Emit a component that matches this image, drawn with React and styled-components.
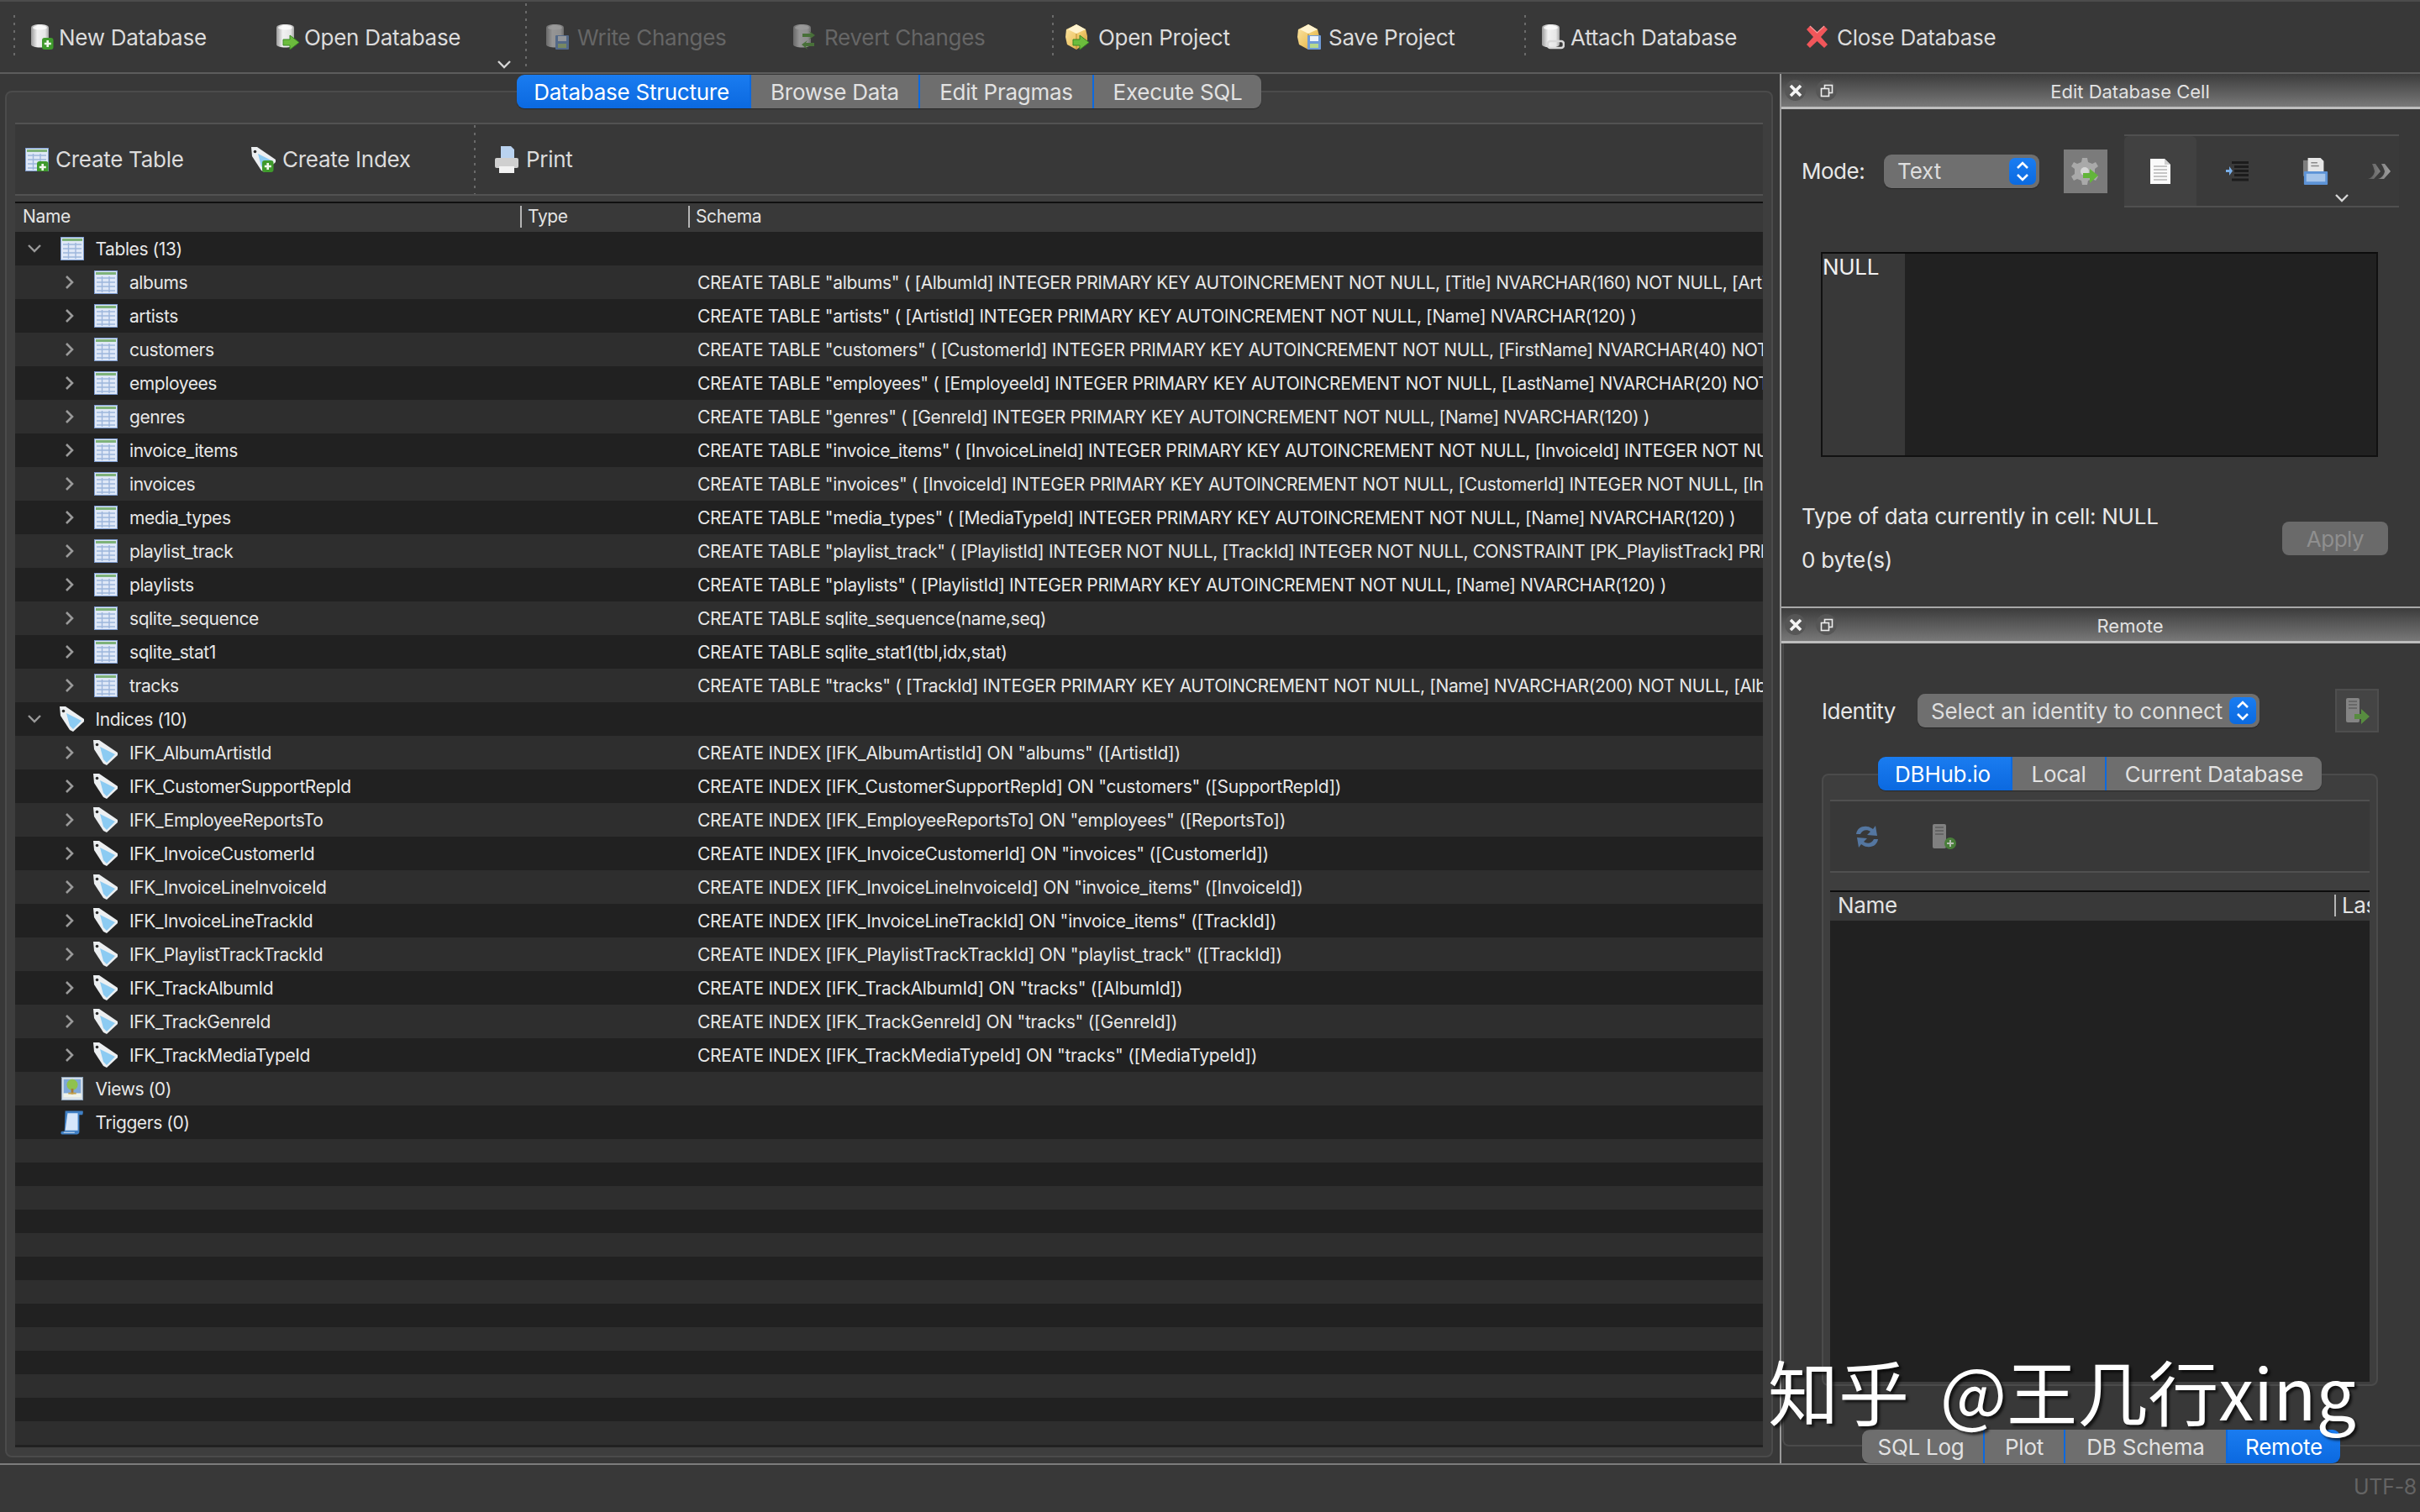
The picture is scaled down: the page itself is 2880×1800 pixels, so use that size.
import React from 'react';
import styled, { createGlobalStyle } from 'styled-components';

const GlobalStyle = createGlobalStyle`
  html, body { margin: 0; padding: 0; background: #383838; }
  * { box-sizing: border-box; }
  body { font-family: Inter, "Liberation Sans", sans-serif; color: #e2e2e2; }
`;

/* ---------- icons ---------- */

const Defs = () => (
  <svg width="0" height="0" style={{ position: 'absolute' }}>
    <defs>
      <linearGradient id="cyl" x1="0" x2="1" y1="0" y2="0">
        <stop offset="0" stopColor="#9b9b9b" />
        <stop offset="0.35" stopColor="#f1f1f1" />
        <stop offset="0.8" stopColor="#e6e6e6" />
        <stop offset="1" stopColor="#a4a4a4" />
      </linearGradient>
      <linearGradient id="box" x1="0" x2="1" y1="0" y2="1">
        <stop offset="0" stopColor="#fbe6a8" />
        <stop offset="0.55" stopColor="#efc869" />
        <stop offset="1" stopColor="#c9963a" />
      </linearGradient>
      <linearGradient id="fade" x1="0" x2="1" y1="0" y2="0">
        <stop offset="0" stopColor="#5a5a5a" />
        <stop offset="1" stopColor="#a0a0a0" />
      </linearGradient>
    </defs>
  </svg>
);

const Cylinder = () => (
  <>
    <path d="M1 4c0-3 5-4 10.500-4S22 1 22 4v20c0 2-5 3.500-10.500 3.500S1 26 1 24z" fill="url(#cyl)" />
    <ellipse cx="11.500" cy="4" rx="8.500" ry="2.500" fill="#fff" opacity=".75" />
  </>
);

const BoxShape = () => (
  <>
    <path d="M13 0l11 6 2 8v7l-13 9-11-6-2-9 1-9z" fill="url(#box)" />
    <path d="M3 6l10 5 11-5-11-6z" fill="#fff3cf" />
    <path d="M13 11v19" stroke="#b98a30" strokeWidth="1" />
  </>
);

const PlusBadge = () => (
  <>
    <rect x="14" y="16" width="13.500" height="14" rx="3" fill="#3f9a2c" />
    <path d="M20.700 19v8M16.800 23h8" stroke="#f2f7ee" strokeWidth="2.600" />
  </>
);

const ArrowBadge = () => (
  <path d="M9 18h8v-5l11 8.500L17 30v-5H9z" fill="#6cbc3d" stroke="#3a8a25" strokeWidth="1" />
);

const FloppyBadge = () => (
  <>
    <rect x="12" y="13" width="16" height="17" rx="1" fill="#6f9bd8" />
    <rect x="15" y="14" width="10" height="6" fill="#eef3fb" />
    <rect x="15" y="23" width="10" height="5" fill="#b7d88c" />
  </>
);

const SwapBadge = () => (
  <>
    <path d="M12 11h10l-2-3 7 5-7 5 2-3h-10z" fill="#58a83a" />
    <path d="M26 22H16l2-3-7 5 7 6-2-4h10z" fill="#58a83a" />
  </>
);

const LinkBadge = () => (
  <rect x="8" y="20" width="19" height="8" rx="3" fill="none" stroke="#d9d9d9" strokeWidth="2.600" />
);

const Badge = ({ type }) => {
  if (type === 'plus') return <PlusBadge />;
  if (type === 'arrow') return <ArrowBadge />;
  if (type === 'floppy') return <FloppyBadge />;
  if (type === 'swap') return <SwapBadge />;
  if (type === 'link') return <LinkBadge />;
  return null;
};

const DbIcon = ({ badge }) => (
  <svg width="28" height="30" viewBox="0 0 28 30">
    <Cylinder />
    <Badge type={badge} />
  </svg>
);

const ProjectIcon = ({ badge }) => (
  <svg width="28" height="32" viewBox="0 0 28 30">
    <BoxShape />
    <Badge type={badge} />
  </svg>
);

const CloseIcon = () => (
  <svg width="27" height="28" viewBox="0 0 27 28">
    <path d="M1 5l4-4 8.500 8L22 1l4 4-8 9 8 9-4 4-8.500-8L5 27l-4-4 8-9z" fill="#f1565a" />
    <path d="M5 1l8.500 8L22 1" fill="none" stroke="#ff9a9a" strokeWidth="1.200" />
  </svg>
);

const TableIcon = ({ plus }) => (
  <svg width="28" height="28" viewBox="0 0 28 28">
    <rect x="0.500" y="0.500" width="27" height="27" fill="#dfe8f7" stroke="#7d9ccf" />
    <rect x="2" y="2" width="24" height="3" fill="#7eb27a" />
    <path d="M3 9h22M3 14h22M3 19h22M3 24h22M9.500 7v19M18 7v19" stroke="#9db6dc" strokeWidth="1.400" />
    {plus && <PlusBadge />}
  </svg>
);

const TagSvg = styled.svg`
  flex: none;
  margin-left: ${(p) => (p.$tree ? -2 : 0)}px;
`;

const TagIcon = ({ plus, tree }) => (
  <TagSvg $tree={tree} width="30" height="30" viewBox="0 0 30 30">
    <path d="M1 0h7l22 15v3L17 30l-4-2L2 11z" fill="#eceff1" />
    <path d="M9 8l18 9-10 10-4-4z" fill="#8ccbf2" />
    <circle cx="5.500" cy="5.500" r="1.800" fill="#2c2c2c" />
    {plus && <PlusBadge />}
  </TagSvg>
);

const ViewIcon = () => (
  <svg width="28" height="28" viewBox="0 0 28 30">
    <rect x="0.500" y="0.500" width="27" height="29" fill="#d9e2ea" stroke="#8aa0b8" />
    <rect x="3" y="3" width="22" height="18" fill="#7fa8d8" />
    <rect x="3" y="21" width="22" height="5" fill="#eef2e8" />
    <circle cx="14" cy="10" r="7" fill="#8fc24e" />
    <rect x="12.500" y="15" width="3" height="7" fill="#a67a3a" />
    <rect x="9" y="20" width="10" height="2" fill="#c2a04a" />
  </svg>
);

const TriggerIcon = () => (
  <svg width="28" height="31" viewBox="0 0 30 32">
    <path d="M6 1h22c1 0 1 3 0 5h-4v22c0 2-2 3-4 3H2c-2 0-2-4 0-4h3z" fill="#3f7fc4" />
    <path d="M9 4h13v22H6z" fill="#d6e6fa" />
    <path d="M4 28h14v1H4z" fill="#eef4fc" />
  </svg>
);

const ChevronRight = () => (
  <svg width="12" height="18" viewBox="0 0 12 18">
    <path d="M2 2l7 7-7 7" fill="none" stroke="#9a9a9a" strokeWidth="2.600" />
  </svg>
);

const ChevronDown = ({ color = '#9a9a9a' }) => (
  <svg width="18" height="12" viewBox="0 0 18 12">
    <path d="M2 2l7 7 7-7" fill="none" stroke={color} strokeWidth="2.400" />
  </svg>
);

const SmallButtonIcon = ({ kind }) => {
  if (kind === 'close') {
    return (
      <svg width="16" height="16" viewBox="0 0 16 16">
        <path d="M2 2l12 12M14 2L2 14" stroke="#f4f4f4" strokeWidth="3.600" />
      </svg>
    );
  }
  return (
    <svg width="16" height="16" viewBox="0 0 16 16">
      <rect x="5.500" y="1.500" width="9" height="9" fill="none" stroke="#eee" strokeWidth="1.600" />
      <rect x="1.500" y="5.500" width="9" height="9" fill="#555" stroke="#eee" strokeWidth="1.600" />
    </svg>
  );
};

const GearIcon = () => (
  <svg width="34" height="36" viewBox="0 0 34 36">
    <path d="M13 2h6l1 5 5 2 4-2 3 5-4 3v6l4 3-3 5-4-2-5 2-1 5h-6l-1-5-5-2-4 2-3-5 4-3v-6l-4-3 3-5 4 2 5-2z" fill="#a9a9a9" />
    <circle cx="16" cy="18" r="5" fill="#d6d6d6" />
    <path d="M14 20h8v-5l10 8-10 9v-6h-8z" fill="#63b53a" />
  </svg>
);

const DocIcon = () => (
  <svg width="26" height="30" viewBox="0 0 26 30">
    <path d="M1 0h17l7 7v23H1z" fill="#fafafa" />
    <path d="M18 0l7 7h-7z" fill="#cfcfcf" />
    <path d="M5 9h16M5 13h16M5 17h16M5 21h16M5 25h16" stroke="#b5b5b5" strokeWidth="1.500" />
  </svg>
);

const IndentIcon = () => (
  <svg width="28" height="24" viewBox="0 0 28 24">
    <path d="M7 1.500h20M10 6.500h17M10 11.500h17M10 16.500h17M7 22h20" stroke="#1c1c1c" strokeWidth="3" />
    <path d="M0 10h4V6l4 5.500L4 17v-4H0z" fill="#79aee8" />
  </svg>
);

const ClipboardIcon = () => (
  <svg width="32" height="32" viewBox="0 0 32 34">
    <rect x="0" y="3" width="8" height="20" fill="#7d7d7d" />
    <path d="M6 0h16l4 4v16H6z" fill="#e6e6e6" />
    <path d="M10 6h8M10 10h10" stroke="#888" strokeWidth="1.600" />
    <rect x="1" y="17" width="30" height="17" rx="1" fill="#5d93d6" />
    <rect x="4" y="20" width="24" height="10" fill="#a6c5ea" />
  </svg>
);

const MoreIcon = () => (
  <svg width="28" height="20" viewBox="0 0 28 20">
    <path d="M5 1h4l6 9-8 9H0c4-1 7-4 8-9-1-4-2-7-3-9zM16 1h4l7 9-8 9h-7c4-1 7-4 8-9-1-4-3-7-4-9z" fill="url(#fade)" />
  </svg>
);

const ServerIcon = ({ badge }) => (
  <svg width="30" height="32" viewBox="0 0 30 32" opacity=".72">
    <rect x="2" y="1" width="16" height="29" rx="2" fill="#9d9d9d" />
    <path d="M5 5h10M5 9h10M5 13h10" stroke="#6b6b6b" strokeWidth="1.400" />
    {badge === 'plus' ? (
      <>
        <circle cx="23" cy="24" r="7" fill="#4f9a3a" />
        <path d="M23 20v8M19 24h8" stroke="#e8f1e3" strokeWidth="2" />
      </>
    ) : (
      <path d="M12 20h8v-6l10 9-10 9v-6h-8z" fill="#5fa83e" />
    )}
  </svg>
);

const RefreshIcon = () => (
  <svg width="32" height="36" viewBox="0 0 32 36" opacity=".72">
    <path d="M3 15C4 8 10 5 16 6c3 0 5 2 7 3l3-4 2 12-12-1 4-4c-4-3-10-2-12 3z" fill="#5f8fc8" />
    <path d="M29 21c-1 7-7 10-13 9-3 0-5-2-7-3l-3 4-2-12 12 1-4 4c4 3 10 2 12-3z" fill="#5f8fc8" />
  </svg>
);

const PrintIcon = () => (
  <svg width="30" height="32" viewBox="0 0 30 32">
    <path d="M8 0h12l4 4v12H8z" fill="#b9d2ef" />
    <rect x="1" y="14" width="28" height="12" rx="2" fill="#cfcfcf" />
    <rect x="6" y="24" width="18" height="8" fill="#f2f2f2" />
  </svg>
);

/* ---------- top toolbar ---------- */

const Shell = styled.div`
  width: 2880px;
  height: 1800px;
  display: flex;
  flex-direction: column;
  background: #383838;
  position: relative;
  overflow: hidden;
`;

const Toolbar = styled.div`
  height: 88px;
  padding-left: 16px;
  display: flex;
  align-items: center;
  border-top: 2px solid #4c4c4c;
  border-bottom: 2px solid #5c5c5c;
`;

const ToolSep = styled.div`
  width: 2px;
  height: ${(p) => (p.$tall ? '80px' : '52px')};
  background: repeating-linear-gradient(#6a6a6a 0 3px, transparent 3px 9px);
`;

const ToolButton = styled.div`
  position: relative;
  width: ${(p) => p.$w}px;
  margin-left: ${(p) => p.$ml || 0}px;
  display: flex;
  align-items: center;
  gap: ${(p) => p.$gap || 6}px;
  font-size: 26px;
  letter-spacing: -0.28px;
  color: ${(p) => (p.$off ? '#666' : '#dcdcdc')};
  white-space: nowrap;

  svg {
    opacity: ${(p) => (p.$off ? 0.5 : 1)};
    flex: none;
  }
`;

const OverflowMark = styled.span`
  position: absolute;
  right: 16px;
  top: 42px;
  display: flex;
`;

/* ---------- tabs ---------- */

const TabRow = styled.div`
  display: flex;
  justify-content: center;
  margin-top: ${(p) => p.$top}px;
  position: relative;
  z-index: 2;
`;

const TabGroup = styled.div`
  display: flex;
  height: 40px;
  border-radius: 9px;
  overflow: hidden;
  box-shadow: 0 1px 1px rgba(0, 0, 0, 0.35);
`;

const Tab = styled.div`
  width: ${(p) => p.$w}px;
  padding-right: ${(p) => p.$pr || 0}px;
  display: flex;
  align-items: center;
  justify-content: center;
  font-size: 26px;
  letter-spacing: -0.25px;
  white-space: nowrap;
  color: ${(p) => (p.$on ? '#fff' : '#e2e2e2')};
  background: ${(p) => (p.$on ? 'linear-gradient(#1a7cf0, #0b69e0)' : '#6e6e6e')};
  & + & {
    border-left: 2px solid ${(p) => (p.$on ? '#0b69e0' : '#626262')};
  }
`;

/* ---------- left pane ---------- */

const Main = styled.div`
  flex: 1;
  display: flex;
  min-height: 0;
`;

const LeftSide = styled.div`
  width: 2118px;
  padding: 20px 8px 7px 6px;
  display: flex;
`;

const Frame = styled.div`
  flex: 1;
  display: flex;
  flex-direction: column;
  min-width: 0;
  padding: 0 10px 10px;
  background: #3e3e3e;
  border: 2px solid #4b4b4b;
  border-radius: 8px;
`;

const SubBar = styled.div`
  height: 87px;
  margin-top: 17px;
  padding-left: 12px;
  display: flex;
  align-items: center;
  background: #383838;
  border-top: 2px solid #525252;
  border-bottom: 2px solid #525252;
`;

const SubButton = styled(ToolButton)`
  gap: 8px;
`;

const SubSep = styled(ToolSep)`
  height: 82px;
`;

const Table = styled.div`
  flex: 1;
  min-height: 0;
  margin-top: 7px;
  border-top: 2px solid #101010;
  overflow: hidden;
  background: #212121;
`;

const HeaderRow = styled.div`
  height: 34px;
  padding-bottom: 2px;
  display: grid;
  grid-template-columns: ${(p) => p.$cols};
  align-items: center;
  background: #393939;
  font-size: ${(p) => p.$size || 21}px;
  letter-spacing: -0.35px;
  color: #e4e4e4;
`;

const HeaderCell = styled.div`
  height: 26px;
  line-height: 26px;
  padding-left: 9px;
  overflow: hidden;
  white-space: nowrap;
  & + & {
    border-left: 2px solid #b5b5b5;
    padding-left: 7px;
  }
`;

const Row = styled.div`
  height: ${(p) => p.$h || 40}px;
  display: grid;
  grid-template-columns: 601px 200px 1fr;
  align-items: center;
  background: ${(p) => (p.$alt ? '#2e2e2e' : '#212121')};
  font-size: 21px;
  letter-spacing: -0.42px;
  color: #e8e8e8;
  white-space: nowrap;
`;

const NameCell = styled.div`
  display: flex;
  align-items: center;
  gap: 14px;
  padding-left: ${(p) => (p.$child ? 42 : 0)}px;
`;

const Twisty = styled.span`
  width: ${(p) => (p.$child ? 40 : 41.5)}px;
  margin-right: -2px;
  padding-left: ${(p) => (p.$child ? 17 : 14)}px;
  display: flex;
  align-items: center;
  flex: none;
`;

const SchemaCell = styled.div`
  grid-column: 3;
  padding-left: 11px;
  overflow: hidden;
  letter-spacing: ${(p) => (p.$index ? -0.26 : -0.37)}px;
`;

/* ---------- right docks ---------- */

const RightSide = styled.div`
  flex: 1;
  display: flex;
  flex-direction: column;
  min-width: 0;
  border-left: 2px solid #9a9a9a;
`;

const DockTop = styled.div`
  height: 634px;
`;

const DockBottom = styled.div`
  flex: 1;
  min-height: 0;
  display: flex;
  flex-direction: column;
  border-top: 2px solid #a8a8a8;
`;

const DockTitle = styled.div`
  height: 42px;
  display: flex;
  align-items: center;
  padding-left: 4px;
  background: linear-gradient(#3c3c3c, #787878);
  border-bottom: 3px solid #bdbdbd;
`;

const DockButtons = styled.div`
  width: 66px;
  display: flex;
  gap: 12px;
`;

const RoundButton = styled.span`
  width: 25px;
  height: 25px;
  border-radius: 50%;
  background: #565656;
  display: flex;
  align-items: center;
  justify-content: center;
`;

const DockName = styled.div`
  flex: 1;
  padding-top: 3px;
  text-align: center;
  font-size: 22px;
  letter-spacing: 0;
  color: #e2e2e2;
`;

const ModeRow = styled.div`
  margin-top: 30px;
  padding-left: 24px;
  height: 87px;
  display: flex;
  align-items: center;
`;

const Label = styled.span`
  width: ${(p) => p.$w}px;
  font-size: 26px;
  letter-spacing: -0.5px;
  color: #e8e8e8;
  flex: none;
`;

const Combo = styled.div`
  width: ${(p) => p.$w}px;
  height: 40px;
  padding: 0 4px 0 16px;
  display: flex;
  align-items: center;
  justify-content: space-between;
  border-radius: 9px;
  background: #6f6f6f;
  font-size: 26px;
  letter-spacing: -0.12px;
  color: #dedede;
  white-space: nowrap;
  flex: none;
  box-shadow: 0 1px 1px rgba(0, 0, 0, 0.35);
`;

const ComboArrows = styled.span`
  width: 32px;
  height: 32px;
  border-radius: 7px;
  background: linear-gradient(#1a7df2, #0b6ae0);
  display: flex;
  align-items: center;
  justify-content: center;
  flex: none;
`;

const SquareButton = styled.div`
  width: 52px;
  height: 52px;
  margin-left: ${(p) => p.$ml}px;
  background: ${(p) => p.$bg || '#7b7b7b'};
  border: ${(p) => (p.$line ? '2px solid #4e4e4e' : 'none')};
  display: flex;
  align-items: center;
  justify-content: center;
  flex: none;
`;

const EditBar = styled.div`
  width: 327px;
  height: 87px;
  margin-left: 20px;
  display: flex;
  align-items: stretch;
  background: #3a3a3a;
  border-top: 2px solid #505050;
  border-bottom: 2px solid #505050;
  position: relative;
`;

const EditButton = styled.div`
  width: ${(p) => p.$w}px;
  padding-left: ${(p) => p.$pl || 0}px;
  display: flex;
  align-items: center;
  justify-content: center;
  background: ${(p) => (p.$on ? '#414141' : 'transparent')};
  border-radius: 6px 6px 0 0;
`;

const EditMark = styled.span`
  position: absolute;
  left: 250px;
  top: 68px;
  display: flex;
`;

const Editor = styled.div`
  width: 663px;
  height: 244px;
  margin: 53px 0 0 47px;
  display: flex;
  border: 2px solid #111;
  border-top-color: #0c0c0c;
  background: #212121;
`;

const Gutter = styled.div`
  width: 98px;
  padding: 1px 0;
  background: #383838;
  font-size: 26px;
  letter-spacing: -0.3px;
  line-height: 30px;
  color: #f0f0f0;
`;

const InfoRow = styled.div`
  margin-top: 53px;
  padding: 0 38px 0 24px;
  display: flex;
  align-items: center;
  justify-content: space-between;
`;

const InfoText = styled.div`
  font-size: 26px;
  letter-spacing: -0.25px;
  color: #e8e8e8;
  line-height: 36px;
  & + & {
    margin-top: 16px;
  }
`;

const ApplyButton = styled.div`
  width: 126px;
  height: 40px;
  border-radius: 8px;
  background: #6a6a6a;
  color: #8f8f8f;
  font-size: 26px;
  letter-spacing: -0.5px;
  display: flex;
  align-items: center;
  justify-content: center;
`;

const RemoteBody = styled.div`
  flex: 1;
  min-height: 0;
  margin-left: 1px;
  padding-left: 45px;
  padding-right: 50px;
  border-left: 2px solid #4a4a4a;
  border-bottom: 2px solid #4a4a4a;
  border-bottom-left-radius: 8px;
`;

const IdentityRow = styled.div`
  margin-top: 54px;
  height: 52px;
  display: flex;
  align-items: center;
`;

const InnerFrame = styled.div`
  margin-top: 49px;
  height: 729px;
  padding: 0 8px;
  display: flex;
  flex-direction: column;
  border: 2px solid #4b4b4b;
  border-radius: 8px;
  background: #3e3e3e;
`;

const InnerBar = styled.div`
  height: 87px;
  margin-top: 11px;
  padding-left: 28px;
  display: flex;
  align-items: center;
  gap: 60px;
  background: #383838;
  border-top: 2px solid #505050;
  border-bottom: 2px solid #505050;
`;

const RemoteTable = styled.div`
  flex: 1;
  margin: 21px 0 3px;
  border-top: 2px solid #0c0c0c;
  overflow: hidden;
  background: #212121;
`;

const BottomTabs = styled.div`
  display: flex;
  justify-content: flex-start;
  padding-left: 96px;
  margin-top: -20px;
  position: relative;
  z-index: 2;
`;

const StatusBar = styled.div`
  height: 58px;
  padding: 0 4px 4px 0;
  display: flex;
  align-items: center;
  justify-content: flex-end;
  border-top: 2px solid #7c7c7c;
  font-size: 25px;
  letter-spacing: -0.3px;
  color: #646464;
`;

const Watermark = styled.div`
  position: absolute;
  left: 2104px;
  top: 1600px;
  font-family: "Noto Sans CJK SC", sans-serif;
  font-size: 84px;
  line-height: 110px;
  word-spacing: 18px;
  color: #fff;
  white-space: nowrap;
  text-shadow: 3px 3px 3px rgba(0, 0, 0, 0.65);
  z-index: 5;
`;

/* ---------- data ---------- */

const tool = (table, rest) => `CREATE TABLE "${table}" ( ${rest}`;
const auto = 'INTEGER PRIMARY KEY AUTOINCREMENT NOT NULL,';

const tables = [
  ['albums', tool('albums', `[AlbumId] ${auto} [Title] NVARCHAR(160) NOT NULL, [Artist`)],
  ['artists', tool('artists', `[ArtistId] ${auto} [Name] NVARCHAR(120) )`)],
  ['customers', tool('customers', `[CustomerId] ${auto} [FirstName] NVARCHAR(40) NOT`)],
  ['employees', tool('employees', `[EmployeeId] ${auto} [LastName] NVARCHAR(20) NOT`)],
  ['genres', tool('genres', `[GenreId] ${auto} [Name] NVARCHAR(120) )`)],
  ['invoice_items', tool('invoice_items', `[InvoiceLineId] ${auto} [InvoiceId] INTEGER NOT NUL`)],
  ['invoices', tool('invoices', `[InvoiceId] ${auto} [CustomerId] INTEGER NOT NULL, [Inv`)],
  ['media_types', tool('media_types', `[MediaTypeId] ${auto} [Name] NVARCHAR(120) )`)],
  ['playlist_track', tool('playlist_track', '[PlaylistId] INTEGER NOT NULL, [TrackId] INTEGER NOT NULL, CONSTRAINT [PK_PlaylistTrack] PRI')],
  ['playlists', tool('playlists', `[PlaylistId] ${auto} [Name] NVARCHAR(120) )`)],
  ['sqlite_sequence', 'CREATE TABLE sqlite_sequence(name,seq)'],
  ['sqlite_stat1', 'CREATE TABLE sqlite_stat1(tbl,idx,stat)'],
  ['tracks', tool('tracks', `[TrackId] ${auto} [Name] NVARCHAR(200) NOT NULL, [Albu`)],
];

const indices = [
  ['IFK_AlbumArtistId', 'albums', 'ArtistId'],
  ['IFK_CustomerSupportRepId', 'customers', 'SupportRepId'],
  ['IFK_EmployeeReportsTo', 'employees', 'ReportsTo'],
  ['IFK_InvoiceCustomerId', 'invoices', 'CustomerId'],
  ['IFK_InvoiceLineInvoiceId', 'invoice_items', 'InvoiceId'],
  ['IFK_InvoiceLineTrackId', 'invoice_items', 'TrackId'],
  ['IFK_PlaylistTrackTrackId', 'playlist_track', 'TrackId'],
  ['IFK_TrackAlbumId', 'tracks', 'AlbumId'],
  ['IFK_TrackGenreId', 'tracks', 'GenreId'],
  ['IFK_TrackMediaTypeId', 'tracks', 'MediaTypeId'],
];

const rows = [
  { name: 'Tables (13)', icon: <TableIcon />, open: true },
  ...tables.map(([name, schema]) => ({ name, schema, icon: <TableIcon />, child: true })),
  { name: 'Indices (10)', icon: <TagIcon tree />, open: true },
  ...indices.map(([name, table, col]) => ({
    name,
    schema: `CREATE INDEX [${name}] ON "${table}" ([${col}])`,
    icon: <TagIcon tree />,
    child: true,
    index: true,
  })),
  { name: 'Views (0)', icon: <ViewIcon /> },
  { name: 'Triggers (0)', icon: <TriggerIcon /> },
];

const UpDown = () => (
  <ComboArrows>
    <svg width="18" height="26" viewBox="0 0 18 26">
      <path d="M3 9l6-6 6 6M3 17l6 6 6-6" fill="none" stroke="#fff" strokeWidth="2.600" />
    </svg>
  </ComboArrows>
);

const TreeRow = ({ row, alt }) => (
  <Row $alt={alt}>
    <NameCell $child={row.child}>
      <Twisty $child={row.child}>
        {row.child && <ChevronRight />}
        {row.open && <ChevronDown />}
      </Twisty>
      {row.icon}
      <span>{row.name}</span>
    </NameCell>
    <SchemaCell $index={row.index}>{row.schema}</SchemaCell>
  </Row>
);

const App = () => (
  <Shell>
    <GlobalStyle />
    <Defs />

    <Toolbar>
      <ToolSep />
      <ToolButton $ml={18} $w={292}><DbIcon badge="plus" />New Database</ToolButton>
      <ToolButton $w={297}>
        <DbIcon badge="arrow" />Open Database
        <OverflowMark><ChevronDown color="#d6d6d6" /></OverflowMark>
      </ToolButton>
      <ToolSep $tall />
      <ToolButton $ml={22} $w={294} $gap={10} $off><DbIcon badge="floppy" />Write Changes</ToolButton>
      <ToolButton $w={309} $gap={10} $off><DbIcon badge="swap" />Revert Changes</ToolButton>
      <ToolSep />
      <ToolButton $ml={14} $w={276} $gap={11}><ProjectIcon badge="arrow" />Open Project</ToolButton>
      <ToolButton $w={270} $gap={9}><ProjectIcon badge="floppy" />Save Project</ToolButton>
      <ToolSep />
      <ToolButton $ml={18} $w={315} $gap={7}><DbIcon badge="link" />Attach Database</ToolButton>
      <ToolButton $w={240} $gap={10}><CloseIcon />Close Database</ToolButton>
    </Toolbar>

    <Main>
      <LeftSide>
        <Frame>
          <TabRow $top={-21}>
            <TabGroup>
              <Tab $w={277} $pr={4} $on>Database Structure</Tab>
              <Tab $w={201}>Browse Data</Tab>
              <Tab $w={207}>Edit Pragmas</Tab>
              <Tab $w={201}>Execute SQL</Tab>
            </TabGroup>
          </TabRow>

          <SubBar>
            <SubButton $w={268}><TableIcon plus />Create Table</SubButton>
            <SubButton $w={266}><TagIcon plus />Create Index</SubButton>
            <SubSep />
            <SubButton $ml={22} $w={120}><PrintIcon />Print</SubButton>
          </SubBar>

          <Table>
            <HeaderRow $cols="601px 200px 1fr">
              <HeaderCell>Name</HeaderCell>
              <HeaderCell>Type</HeaderCell>
              <HeaderCell>Schema</HeaderCell>
            </HeaderRow>
            {rows.map((row, i) => <TreeRow key={row.name} row={row} alt={i % 2 === 1} />)}
            {Array.from({ length: 14 }, (_, i) => <Row key={i} $h={28} $alt={i % 2 === 0} />)}
          </Table>
        </Frame>
      </LeftSide>

      <RightSide>
        <DockTop>
          <DockTitle>
            <DockButtons>
              <RoundButton><SmallButtonIcon kind="close" /></RoundButton>
              <RoundButton><SmallButtonIcon kind="float" /></RoundButton>
            </DockButtons>
            <DockName>Edit Database Cell</DockName>
          </DockTitle>

          <ModeRow>
            <Label $w={98}>Mode:</Label>
            <Combo $w={185}>Text<UpDown /></Combo>
            <SquareButton $ml={29}><GearIcon /></SquareButton>
            <EditBar>
              <EditButton $w={86} $on><DocIcon /></EditButton>
              <EditButton $w={98}><IndentIcon /></EditButton>
              <EditButton $w={88}><ClipboardIcon /></EditButton>
              <EditButton $w={55} $pl={8}><MoreIcon /></EditButton>
              <EditMark><ChevronDown color="#d6d6d6" /></EditMark>
            </EditBar>
          </ModeRow>

          <Editor><Gutter>NULL</Gutter></Editor>

          <InfoRow>
            <div>
              <InfoText>Type of data currently in cell: NULL</InfoText>
              <InfoText>0 byte(s)</InfoText>
            </div>
            <ApplyButton>Apply</ApplyButton>
          </InfoRow>
        </DockTop>

        <DockBottom>
          <DockTitle>
            <DockButtons>
              <RoundButton><SmallButtonIcon kind="close" /></RoundButton>
              <RoundButton><SmallButtonIcon kind="float" /></RoundButton>
            </DockButtons>
            <DockName>Remote</DockName>
          </DockTitle>

          <RemoteBody>
            <IdentityRow>
              <Label $w={114}>Identity</Label>
              <Combo $w={407}>Select an identity to connect<UpDown /></Combo>
              <SquareButton $ml={90} $bg="#444" $line><ServerIcon badge="arrow" /></SquareButton>
            </IdentityRow>

            <InnerFrame>
              <TabRow $top={-22}>
                <TabGroup>
                  <Tab $w={158} $pr={4} $on>DBHub.io</Tab>
                  <Tab $w={112}>Local</Tab>
                  <Tab $w={258}>Current Database</Tab>
                </TabGroup>
              </TabRow>
              <InnerBar>
                <RefreshIcon />
                <ServerIcon badge="plus" />
              </InnerBar>
              <RemoteTable>
                <HeaderRow $cols="600px 1fr" $size={26}>
                  <HeaderCell>Name</HeaderCell>
                  <HeaderCell>Las</HeaderCell>
                </HeaderRow>
              </RemoteTable>
            </InnerFrame>
          </RemoteBody>

          <BottomTabs>
            <TabGroup>
              <Tab $w={144} $pr={4}>SQL Log</Tab>
              <Tab $w={96}>Plot</Tab>
              <Tab $w={193}>DB Schema</Tab>
              <Tab $w={136} $on>Remote</Tab>
            </TabGroup>
          </BottomTabs>
        </DockBottom>
      </RightSide>
    </Main>

    <StatusBar>UTF-8</StatusBar>
    <Watermark>知乎 @王几行xing</Watermark>
  </Shell>
);

export default App;
